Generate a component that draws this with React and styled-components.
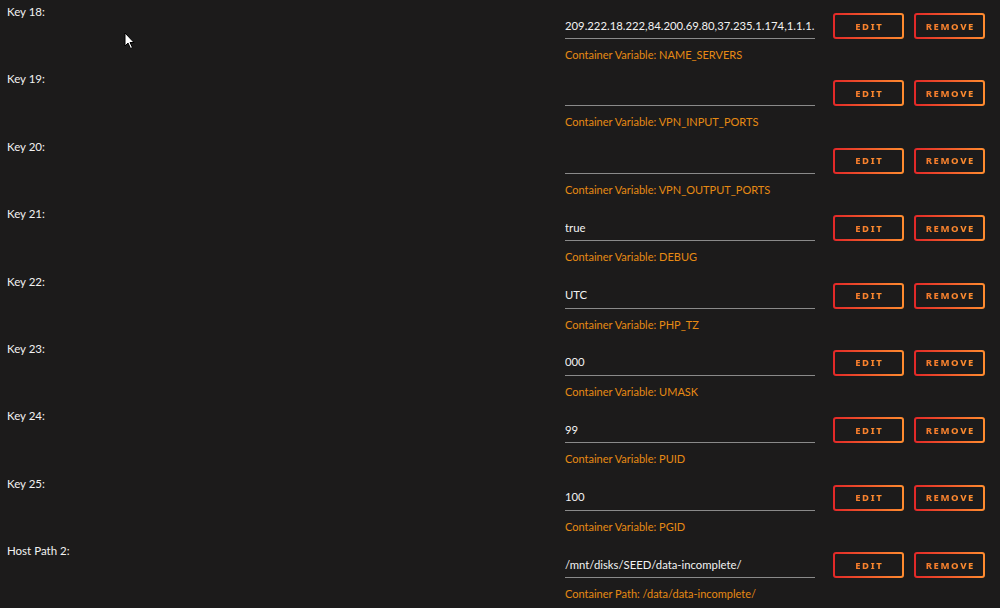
import styled, { createGlobalStyle } from "styled-components";

const GlobalStyle = createGlobalStyle`
  html, body {
    margin: 0;
    padding: 0;
    background: #1c1b1b;
  }
  body {
    font-family: Lato, "Noto Sans", sans-serif;
    color: #f2f2f2;
    overflow: hidden;
  }
`;

// rows of the docker template form, as shown in the screenshot
const fields = [
  { label: "Key 18", value: "209.222.18.222,84.200.69.80,37.235.1.174,1.1.1.1", hint: "Container Variable: NAME_SERVERS" },
  { label: "Key 19", value: "", hint: "Container Variable: VPN_INPUT_PORTS" },
  { label: "Key 20", value: "", hint: "Container Variable: VPN_OUTPUT_PORTS" },
  { label: "Key 21", value: "true", hint: "Container Variable: DEBUG" },
  { label: "Key 22", value: "UTC", hint: "Container Variable: PHP_TZ" },
  { label: "Key 23", value: "000", hint: "Container Variable: UMASK" },
  { label: "Key 24", value: "99", hint: "Container Variable: PUID" },
  { label: "Key 25", value: "100", hint: "Container Variable: PGID" },
  { label: "Host Path 2", value: "/mnt/disks/SEED/data-incomplete/", hint: "Container Path: /data/data-incomplete/" },
];

const App = () => {
  return (
    <Page>
      <GlobalStyle />
      {fields.map(({ label, value, hint }) => (
        <Row key={label}>
          <Label>{label}:</Label>
          <Field>
            <Controls>
              <TextInput type="text" defaultValue={value} />
              <Button>
                <ButtonText>Edit</ButtonText>
              </Button>
              <Button>
                <ButtonText>Remove</ButtonText>
              </Button>
            </Controls>
            <Hint>{hint}</Hint>
          </Field>
        </Row>
      ))}

      {/* mouse pointer captured in the screenshot */}
      <Cursor width="12" height="18" viewBox="0 0 12 18">
        <path
          d="M1 1 L1 14 L4 11 L6.5 16.5 L8.5 15.5 L6 10.5 L10 10.5 Z"
          fill="#fff"
          stroke="#000"
          strokeWidth="1"
        />
      </Cursor>
    </Page>
  );
};

const Page = styled.div`
  position: relative;
  width: 1000px;
  height: 608px;
  overflow: hidden;
`;

const Row = styled.div`
  display: grid;
  grid-template-columns: 565px 1fr;
  height: 67.4px;
`;

const Label = styled.div`
  padding-left: 7px;
  font-size: 11.5px;
  line-height: 24px;
  color: #f2f2f2;
`;

const Field = styled.div`
  display: flex;
  flex-direction: column;
  padding-top: 13px;
`;

const Controls = styled.div`
  display: flex;
  align-items: flex-start;
`;

const TextInput = styled.input`
  box-sizing: border-box;
  width: 250px;
  height: 26px;
  margin: 0 18px 0 0;
  padding: 0 0 1px;
  background: transparent;
  border: none;
  border-bottom: 1px solid #8a8a8a;
  color: #f2f2f2;
  font-family: Lato, "Noto Sans", sans-serif;
  font-size: 11.3px;
  outline: none;
`;

const Button = styled.button`
  box-sizing: border-box;
  display: flex;
  align-items: center;
  justify-content: center;
  width: 71px;
  height: 26px;
  margin-right: 10px;
  padding: 0;
  border: 2px solid transparent;
  border-radius: 3px;
  background: linear-gradient(#1c1b1b, #1c1b1b) padding-box,
    linear-gradient(90deg, #e22828 0%, #ff8c2f 100%) border-box;
  cursor: pointer;
`;

const ButtonText = styled.span`
  font-family: "Noto Sans", Lato, sans-serif;
  font-size: 9.5px;
  font-weight: 800;
  letter-spacing: 1.6px;
  text-transform: uppercase;
  margin-right: -1.6px;
  background: linear-gradient(90deg, #f47a2c 0%, #ff8f30 100%);
  -webkit-background-clip: text;
  background-clip: text;
  color: transparent;
`;

const Hint = styled.div`
  margin-top: 8px;
  font-size: 11px;
  line-height: 16px;
  color: #e68a14;
`;

const Cursor = styled.svg`
  position: absolute;
  left: 124px;
  top: 32px;
`;

export default App;
